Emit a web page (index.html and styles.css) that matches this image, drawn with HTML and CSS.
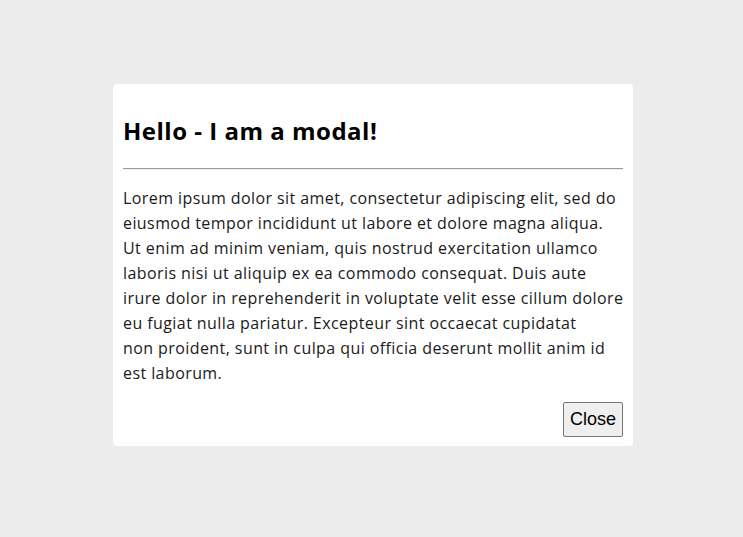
FILE: index.html
```html
<!DOCTYPE html>
<html lang="en">
<head>
<meta charset="utf-8">
<title>Modal</title>
<link rel="stylesheet" href="styles.css">
</head>
<body>
<div class="modal">
  <h2 class="modal-title">Hello - I am a modal!</h2>
  <hr class="modal-rule">
  <p class="modal-text">Lorem ipsum dolor sit amet, consectetur adipiscing elit, sed do<br>
eiusmod tempor incididunt ut labore et dolore magna aliqua.<br>
Ut enim ad minim veniam, quis nostrud exercitation ullamco<br>
laboris nisi ut aliquip ex ea commodo consequat. Duis aute<br>
irure dolor in reprehenderit in voluptate velit esse cillum dolore<br>
eu fugiat nulla pariatur. Excepteur sint occaecat cupidatat<br>
non proident, sunt in culpa qui officia deserunt mollit anim id<br>
est laborum.</p>
  <div class="modal-actions">
    <button class="close-btn" type="button">Close</button>
  </div>
</div>
</body>
</html>
```

FILE: styles.css
```css
html, body {
  margin: 0;
  padding: 0;
}
body {
  background: #ececec;
  font-family: "Open Sans", "DejaVu Sans", sans-serif;
  color: #1a1a1a;
  padding-top: 84px;
  min-height: 537px;
  box-sizing: border-box;
}
.modal {
  width: 520px;
  margin-left: 113px;
  box-sizing: border-box;
  background: #ffffff;
  border-radius: 4px;
  padding: 10px 10px 9px 10px;
}
.modal-title {
  margin: 19px 0 0 0;
  font-size: 24px;
  line-height: 36px;
  font-weight: 700;
  color: #000;
  letter-spacing: 0.5px;
}
.modal-rule {
  margin: 19px 0 0 0;
  border: 0;
  border-top: 1px solid #9a9a9a;
  border-bottom: 1px solid #eeeeee;
  height: 0;
}
.modal-text {
  margin: 16px 0 0 0;
  font-size: 16px;
  line-height: 25px;
  white-space: nowrap;
  letter-spacing: 0.42px;
}
.modal-actions {
  display: flex;
  justify-content: flex-end;
  margin-top: 16px;
}
.close-btn {
  font-family: "Liberation Sans", Arial, sans-serif;
  font-size: 18px;
  line-height: 21px;
  padding: 6px 6px;
  background: #efefef;
  color: #000;
  border: 1px solid #767676;
  border-radius: 2px;
  width: 60px;
  height: 35px;
  box-sizing: border-box;
}
```
